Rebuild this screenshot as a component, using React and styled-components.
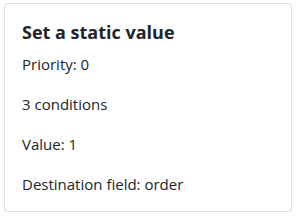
import React from 'react'
import styled, { createGlobalStyle } from 'styled-components'

const Global = createGlobalStyle`
  body {
    margin: 0;
    background: #fff;
    font-family: 'Segoe UI', 'Open Sans', 'Noto Sans', sans-serif;
    color: #212529;
  }
`

const Card = styled.div`
  box-sizing: border-box;
  margin: 3px 0 0 4px;
  width: 288px;
  height: 209px;
  border: 1px solid rgba(0, 0, 0, 0.125);
  border-radius: 4px;
  background: #fff;
  padding: 18px 17px;
`

const Title = styled.h5`
  margin: 0 0 8px;
  font-size: 18px;
  font-weight: 700;
  line-height: 1.2;
`

const Line = styled.p`
  margin: 0 0 16px;
  font-size: 15px;
  line-height: 24px;
`

export default function App() {
  const lines = ['Priority: 0', '3 conditions', 'Value: 1', 'Destination field: order']
  return (
    <>
      <Global />
      <Card>
        <Title>Set a static value</Title>
        {lines.map((l) => (
          <Line key={l}>{l}</Line>
        ))}
      </Card>
    </>
  )
}
